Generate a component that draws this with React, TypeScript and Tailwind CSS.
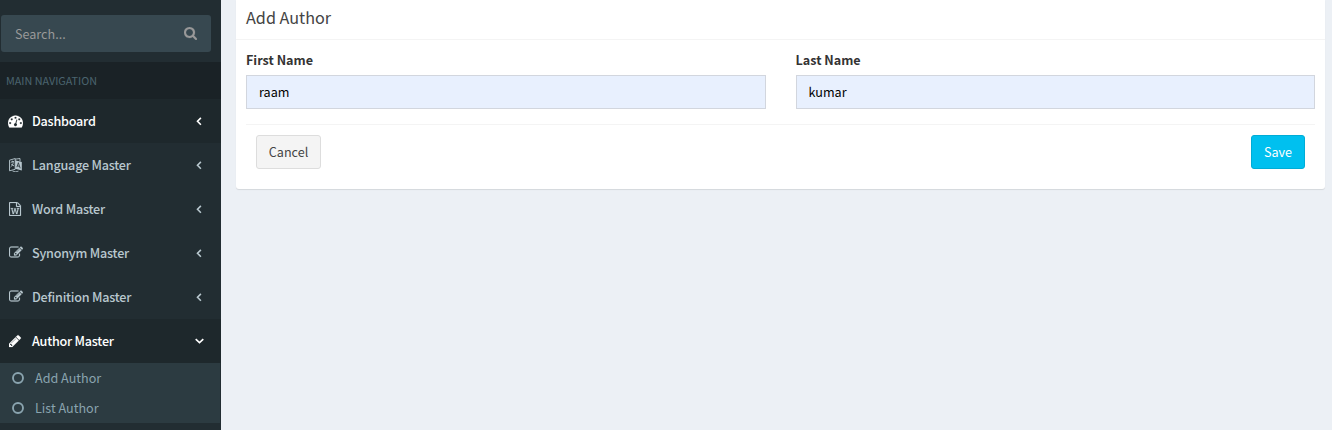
import React from 'react';

type IconProps = { d: string; box: string; className?: string };
const Icon = ({ d, box, className = '' }: IconProps) => (
  <svg viewBox={box} fill="currentColor" stroke="currentColor" strokeWidth="24" className={`block shrink-0 ${className}`}>
    <path d={d} />
  </svg>
);

const DASH =
  'M384 1152q0-53-37.5-90.5t-90.5-37.5-90.5 37.5-37.5 90.5 37.5 90.5 90.5 37.5 90.5-37.5 37.5-90.5zm192-448q0-53-37.5-90.5t-90.5-37.5-90.5 37.5-37.5 90.5 37.5 90.5 90.5 37.5 90.5-37.5 37.5-90.5zm428 481l101-382q6-26-7.5-48.5t-38.5-29.5-48 6.5-30 39.5l-101 382q-60 5-107 43.5t-63 98.5q-20 77 20 146t117 89 146-20 89-117q16-60-6-117t-72-91zm660-33q0-53-37.5-90.5t-90.5-37.5-90.5 37.5-37.5 90.5 37.5 90.5 90.5 37.5 90.5-37.5 37.5-90.5zm-640-640q0-53-37.5-90.5t-90.5-37.5-90.5 37.5-37.5 90.5 37.5 90.5 90.5 37.5 90.5-37.5 37.5-90.5zm448 192q0-53-37.5-90.5t-90.5-37.5-90.5 37.5-37.5 90.5 37.5 90.5 90.5 37.5 90.5-37.5 37.5-90.5zm320 448q0 261-141 483-19 29-54 29h-1402q-35 0-54-29-141-221-141-483 0-182 71-348t191-286 286-191 348-71 348 71 286 191 191 286 71 348z';
const SEARCH =
  'M1216 832q0-185-131.5-316.5t-316.5-131.5-316.5 131.5-131.5 316.5 131.5 316.5 316.5 131.5 316.5-131.5 131.5-316.5zm512 832q0 52-38 90t-90 38q-54 0-90-38l-343-342q-179 124-399 124-143 0-273.5-55.5t-225-150-150-225-55.5-273.5 55.5-273.5 150-225 225-150 273.5-55.5 273.5 55.5 225 150 150 225 55.5 273.5q0 220-124 399l343 343q37 37 37 90z';
const EDIT =
  'M888 1184l116-116-152-152-116 116v56h96v96h56zm440-720q-16-16-33 1l-350 350q-17 17-1 33t33-1l350-350q17-17 1-33zm80 594v190q0 119-84.5 203.5t-203.5 84.5h-832q-119 0-203.5-84.5t-84.5-203.5v-832q0-119 84.5-203.5t203.5-84.5h832q63 0 117 25 15 7 18 23 3 17-9 29l-49 49q-14 14-32 8-23-6-45-6h-832q-66 0-113 47t-47 113v832q0 66 47 113t113 47h832q66 0 113-47t47-113v-126q0-13 9-22l64-64q15-15 35-7t20 29zm-96-738l288 288-672 672h-288v-288zm444 132l-92 92-288-288 92-92q28-28 68-28t68 28l152 152q28 28 28 68t-28 68z';
const PENCIL =
  'M491 1536l91-91-235-235-91 91v107h128v128h107zm523-928q0-22-22-22-10 0-17 7l-542 542q-7 7-7 17 0 22 22 22 10 0 17-7l542-542q7-7 7-17zm-54-192l416 416-832 832h-416v-416zm683 96q0 53-37 90l-166 166-416-416 166-165q36-38 90-38 53 0 91 38l235 234q37 39 37 91z';
const WORD =
  'M1596 380q28 28 48 76t20 88v1152q0 40-28 68t-68 28h-1344q-40 0-68-28t-28-68v-1600q0-40 28-68t68-28h896q40 0 88 20t76 48zm-444-244v376h376q-10-29-22-41l-313-313q-12-12-41-22zm384 1528v-1024h-416q-40 0-68-28t-28-68v-416h-768v1536h1280zm-1175-896v107h70l164 661h159l128-485q7-20 10-46 2-16 2-24h4l3 24q1 3 3.5 20t5.5 26l128 485h159l164-661h70v-107h-300v107h90l-99 438q-5 20-7 46l-2 21h-4l-3-21q-1-5-4-21t-5-25l-144-545h-114l-144 545q-2 9-4.5 24.5t-3.5 21.5l-4 21h-4l-2-21q-2-26-7-46l-99-438h90v-107h-300z';

const LanguageIcon = () => (
  <svg viewBox="0 0 14 14" className="block size-3.5 shrink-0" fill="none" stroke="currentColor">
    <path d="M.5 2.2 6.2.5v10.8L.5 12.8zM6.2 1.2 11 .5v3" strokeWidth=".9" />
    <path d="M1.7 4.3 5 3.4M3.3 2.7v1.4M4.3 4.2C4 6.5 3 8 1.6 9M2.2 5.8c.6 1.1 1.5 1.7 2.8 2" strokeWidth=".9" />
    <path d="M6.2 2.2 12.8 4v8.5L6.2 10.8z" fill="currentColor" stroke="none" />
    <path d="m7.9 9.2 1.5-4.5 1.8 5.6M8.4 7.8l2.1.6" stroke="#222d32" strokeWidth=".8" />
    <path d="M3.5 13c2 .9 4 .9 6 .1" strokeWidth=".8" />
  </svg>
);

const AngleLeft = () => (
  <svg viewBox="0 0 6 10" className="block h-2.5 w-1.5" fill="none" stroke="currentColor" strokeWidth="1.6">
    <path d="M4.9 1.9 1.5 5.3l3.4 3.4" />
  </svg>
);
const AngleDown = () => (
  <svg viewBox="0 0 10 6" className="-mr-0.5 block h-1.5 w-2.5" fill="none" stroke="currentColor" strokeWidth="1.6">
    <path d="M1.7 1.1 5.5 4.7l3.8-3.6" />
  </svg>
);

const items = [
  { label: 'Dashboard', icon: <Icon d={DASH} box="0 64 1792 1792" className="-ml-px size-[15px]" />, active: true },
  { label: 'Language Master', icon: <LanguageIcon /> },
  { label: 'Word Master', icon: <Icon d={WORD} box="128 0 1792 1792" className="size-3.5" /> },
  { label: 'Synonym Master', icon: <Icon d={EDIT} box="0 64 1792 1792" className="size-3.5" /> },
  { label: 'Definition Master', icon: <Icon d={EDIT} box="0 64 1792 1792" className="size-3.5" /> },
  { label: 'Author Master', icon: <Icon d={PENCIL} box="128 0 1792 1792" className="size-3.5" />, active: true, open: true },
];

const Field = ({ label, value }: { label: string; value: string }) => (
  <label className="block flex-1">
    <span className="block h-5 leading-5 font-bold">{label}</span>
    <input
      defaultValue={value}
      className="mt-[5px] block h-[34px] w-full border border-[#d2d6de] bg-[#e8f0fe] px-3 pb-0.5 text-black outline-none"
    />
  </label>
);

export default function App() {
  return (
    <div className="flex h-[430px] overflow-hidden bg-[#ecf0f5] font-['Noto_Sans_CJK_SC','Noto_Sans',sans-serif] text-[12.6px] leading-5 text-[#333]">
      <aside className="w-[221px] shrink-0 bg-[#222d32]">
        <div className="mt-[15px] mr-2.5 ml-px flex h-[37px] items-center justify-between rounded-[3px] bg-[#374850] pr-3.5 pl-3.5 text-[#999]">
          <input placeholder="Search..." className="w-32 bg-transparent outline-none placeholder:text-[#999]" />
          <Icon d={SEARCH} box="64 128 1664 1664" className="size-[13px]" />
        </div>
        <div className="mt-2.5 flex h-[37px] items-center bg-[#1a2226] pb-0.5 pl-1.5 text-[10.8px] text-[#4b646f]">MAIN NAVIGATION</div>
        <nav>
          {items.map((it) => (
            <a
              key={it.label}
              className={`flex h-11 items-center pr-[19px] pl-[9px] ${it.active ? 'bg-[#1e282c] text-white' : 'text-[#b8c7ce]'}`}
            >
              <span className="w-[23px]">{it.icon}</span>
              <span className="flex-1 font-medium tracking-[-0.22px]">{it.label}</span>
              {it.open ? <AngleDown /> : <AngleLeft />}
            </a>
          ))}
          <div className="mr-px bg-[#2c3b41] text-[#8aa4af]">
            {['Add Author', 'List Author'].map((t) => (
              <a key={t} className="flex h-[30px] items-center pl-3">
                <svg viewBox="0 0 12 12" className="mr-[11px] block size-3" fill="none" stroke="currentColor" strokeWidth="1.9">
                  <circle cx="6" cy="6" r="5" />
                </svg>
                {t}
              </a>
            ))}
          </div>
        </nav>
      </aside>
      <main className="flex-1 pr-[7px] pl-[15px]">
        <section className="h-[189px] rounded-b-[3px] bg-white shadow-[0_1px_1px_rgba(0,0,0,0.1)]">
          <h3 className="flex h-10 items-center border-b border-[#f4f4f4] px-2.5 pb-[5px] text-[16.2px] text-[#444]">Add Author</h3>
          <div className="px-2.5 pt-2.5">
            <div className="flex gap-[30px]">
              <Field label="First Name" value="raam" />
              <Field label="Last Name" value="kumar" />
            </div>
            <div className="mt-[15px] flex justify-between border-t border-[#f4f4f4] px-2.5 pt-2.5">
              <button className="h-[34px] w-[65px] rounded-[3px] border border-[#ddd] bg-[#f4f4f4] text-[#444]">Cancel</button>
              <button className="h-[34px] w-[54px] rounded-[3px] border border-[#00acd6] bg-[#00c0ef] text-white">Save</button>
            </div>
          </div>
        </section>
      </main>
    </div>
  );
}
